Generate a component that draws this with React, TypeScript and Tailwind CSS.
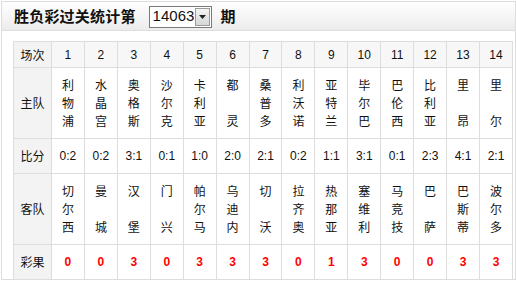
import React from 'react';

const home = ['利物浦', '水晶宫', '奥格斯', '沙尔克', '卡利亚', '都灵', '桑普多', '利沃诺', '亚特兰', '毕尔巴', '巴伦西', '比利亚', '里昂', '里尔'];
const away = ['切尔西', '曼城', '汉堡', '门兴', '帕尔马', '乌迪内', '切沃', '拉齐奥', '热那亚', '塞维利', '马竞技', '巴萨', '巴斯蒂', '波尔多'];
const scores = ['0:2', '0:2', '3:1', '0:1', '1:0', '2:0', '2:1', '0:2', '1:1', '3:1', '0:1', '2:3', '4:1', '2:1'];
const results = ['0', '0', '3', '0', '3', '3', '3', '0', '1', '3', '0', '0', '3', '3'];

const cjk = { fontFamily: '"Noto Sans CJK SC", "DejaVu Sans", sans-serif' };
const num = { fontFamily: '"Liberation Sans", Arial, sans-serif' };

const TeamName: React.FC<{ name: string }> = ({ name }) => {
  const chars = name.length === 2 ? [name[0], '\u00a0', name[1]] : name.split('');
  return (
    <div className="flex flex-col items-center text-[12px] leading-[18px]" style={cjk}>
      {chars.map((c, i) => (
        <span key={i}>{c}</span>
      ))}
    </div>
  );
};

export default function App() {
  const cell = 'border border-[#dddddd] text-center align-middle p-0';
  const label = `${cell} bg-[#f3f3f3] text-[12px] w-[38px]`;

  return (
    <div className="ml-px mt-px w-[515px] h-[279px] border border-[#dddddd] bg-white text-[#111]">
      <div className="h-[29px] border-b border-[#dddddd] bg-gradient-to-b from-white to-[#ececec] flex items-center pl-[12px]">
        <span className="text-[15px] font-bold tracking-[0.2px]" style={cjk}>胜负彩过关统计第</span>
        <div className="ml-[13px] mt-px flex items-center h-[22px] w-[63px] border border-[#7a7a7a] bg-white">
          <span className="text-[15px] pl-[3px] flex-1" style={num}>14063</span>
          <div className="mr-px w-[15px] h-[18px] border border-[#9a9a9a] bg-gradient-to-b from-[#f4f4f4] to-[#d6d6d6] flex items-center justify-center">
            <svg width="7" height="4" viewBox="0 0 7 4">
              <path d="M0 0h7L3.5 4z" fill="#222" />
            </svg>
          </div>
        </div>
        <span className="ml-[9px] text-[15px] font-bold" style={cjk}>期</span>
      </div>

      <table className="ml-[11px] mt-[10px] border-collapse table-fixed w-[500px]">
        <tbody>
          <tr className="h-[26px]">
            <td className={label} style={cjk}>场次</td>
            {home.map((_, i) => (
              <td key={i} className={`${cell} bg-[#f7f7f7] text-[12px]`} style={num}>{i + 1}</td>
            ))}
          </tr>
          <tr className="h-[71px]">
            <td className={label} style={cjk}>主队</td>
            {home.map((t, i) => (
              <td key={i} className={cell}><TeamName name={t} /></td>
            ))}
          </tr>
          <tr className="h-[35px]">
            <td className={label} style={cjk}>比分</td>
            {scores.map((s, i) => (
              <td key={i} className={`${cell} text-[12px]`} style={num}>{s}</td>
            ))}
          </tr>
          <tr className="h-[71px]">
            <td className={label} style={cjk}>客队</td>
            {away.map((t, i) => (
              <td key={i} className={cell}><TeamName name={t} /></td>
            ))}
          </tr>
          <tr className="h-[35px]">
            <td className={label} style={cjk}>彩果</td>
            {results.map((r, i) => (
              <td key={i} className={`${cell} text-[12px] font-bold text-[#ff0000]`} style={num}>{r}</td>
            ))}
          </tr>
        </tbody>
      </table>
    </div>
  );
}
